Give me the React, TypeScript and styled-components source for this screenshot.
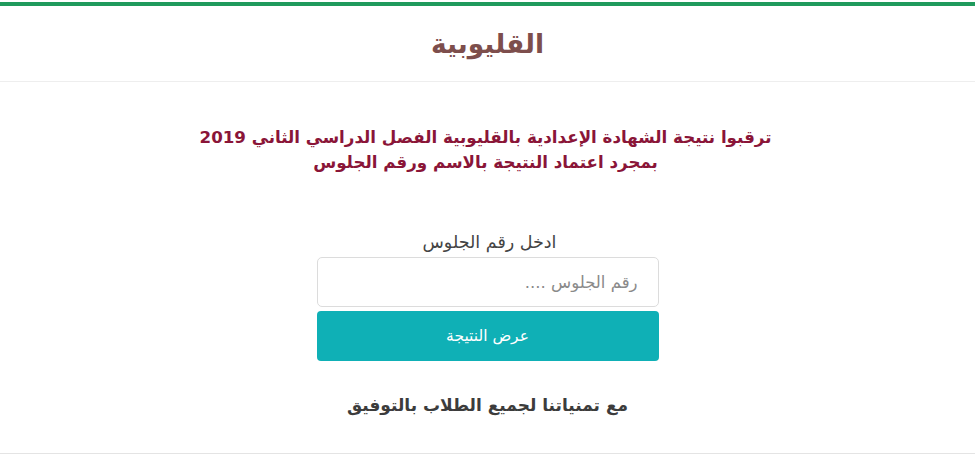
import React from 'react';
import styled, { createGlobalStyle } from 'styled-components';

const GlobalStyle = createGlobalStyle`
  html, body {
    margin: 0;
    padding: 0;
    background: #ffffff;
  }
  body {
    font-family: "DejaVu Sans", "Noto Sans", sans-serif;
  }
`;

const Card = styled.div`
  box-sizing: border-box;
  width: 975px;
  height: 452px;
  margin-top: 2px;
  border-top: 4px solid #1f9a5c;
  border-bottom: 1px solid #e4e4e4;
  background: #fff;
  display: flex;
  flex-direction: column;
  direction: rtl;
`;

const Header = styled.div`
  height: 75px;
  border-bottom: 1px solid #eeeeee;
  display: flex;
  align-items: center;
  justify-content: center;
`;

const Title = styled.h1`
  margin: 0;
  font-size: 26.5px;
  font-weight: bold;
  color: #7d4e4c;
`;

const Body = styled.div`
  display: flex;
  flex-direction: column;
  align-items: center;
  padding-top: 43px;
`;

const Notice = styled.p`
  margin: 0 4px 0 0;
  font-size: 16.7px;
  font-weight: bold;
  line-height: 25px;
  text-align: center;
  color: #8a1538;
`;

const Form = styled.form`
  display: flex;
  flex-direction: column;
  align-items: stretch;
  width: 342px;
  margin-top: 58px;
`;

const Label = styled.label`
  text-align: center;
  font-size: 17.5px;
  line-height: 18px;
  color: #444;
  margin-bottom: 6px;
  padding-left: 4px;
`;

const Input = styled.input`
  box-sizing: border-box;
  height: 50px;
  border: 1px solid #dcdcdc;
  border-radius: 5px;
  padding: 0 20px;
  font-family: inherit;
  font-size: 16.5px;
  direction: rtl;
  outline: none;
  &::placeholder {
    color: #8a8a8a;
  }
`;

const Button = styled.button`
  height: 50px;
  margin-top: 4px;
  border: none;
  border-radius: 4px;
  background: #0fb0b6;
  color: #fff;
  font-family: inherit;
  font-size: 15.5px;
  cursor: pointer;
`;

const Wish = styled.p`
  margin: 34px 0 0;
  font-size: 17px;
  font-weight: bold;
  color: #3c3c3c;
`;

const App = () => {
  return (
    <>
      <GlobalStyle />
      <Card>
        <Header>
          <Title>القليوبية</Title>
        </Header>
        <Body>
          <Notice>
            ترقبوا نتيجة الشهادة الإعدادية بالقليوبية الفصل الدراسي الثاني 2019
            <br />
            بمجرد اعتماد النتيجة بالاسم ورقم الجلوس
          </Notice>
          <Form onSubmit={(e) => e.preventDefault()}>
            <Label htmlFor="seat">ادخل رقم الجلوس</Label>
            <Input id="seat" placeholder="رقم الجلوس ...." />
            <Button type="submit">عرض النتيجة</Button>
          </Form>
          <Wish>مع تمنياتنا لجميع الطلاب بالتوفيق</Wish>
        </Body>
      </Card>
    </>
  );
};

export default App;
